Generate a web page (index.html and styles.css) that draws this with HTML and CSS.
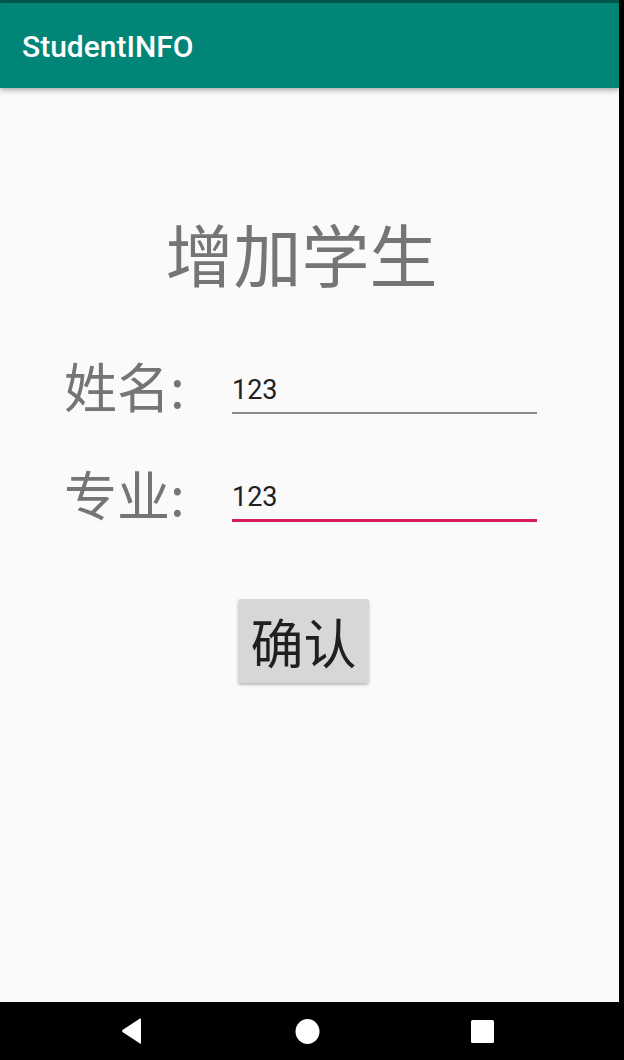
FILE: index.html
```html
<!DOCTYPE html>
<html lang="zh">
<head>
<meta charset="utf-8">
<link rel="stylesheet" href="styles.css">
</head>
<body>
<div class="device">
  <div class="screen">
    <div class="status-bar"></div>
    <header class="app-bar"><span class="app-title">StudentINFO</span></header>
    <main class="content">
      <h1 class="page-title">增加学生</h1>
      <div class="form-row">
        <span class="label">姓名:</span>
        <div class="field"><span class="value">123</span></div>
      </div>
      <div class="form-row">
        <span class="label">专业:</span>
        <div class="field focused"><span class="value">123</span></div>
      </div>
      <div class="actions">
        <button class="btn">确认</button>
      </div>
    </main>
    <nav class="nav-bar">
      <svg class="nav-icon" width="22" height="26" viewBox="0 0 22 26"><path d="M20 1 L20 25 Q20 26 19 25.4 L1.5 14 Q0.5 13 1.5 12 L19 0.6 Q20 0 20 1 Z" fill="#fff"/></svg>
      <svg class="nav-icon" width="25" height="25" viewBox="0 0 25 25"><ellipse cx="12.5" cy="12.5" rx="12" ry="12.5" fill="#fff"/></svg>
      <svg class="nav-icon" width="23" height="23" viewBox="0 0 23 23"><rect x="0" y="0" width="23" height="23" rx="1.5" fill="#fff"/></svg>
    </nav>
  </div>
  <div class="edge"></div>
</div>
</body>
</html>
```
FILE: styles.css
```css
* { box-sizing: border-box; }
html, body { margin: 0; padding: 0; background: #000; }
body { width: 624px; height: 1060px; overflow: hidden; font-family: Roboto, "Noto Sans CJK SC", sans-serif; }
.device { display: flex; width: 624px; height: 1060px; }
.screen { width: 619px; height: 1060px; display: flex; flex-direction: column; background: #fafafa; }
.edge { width: 5px; background: #000; }
.status-bar { height: 3px; background: #00574b; }
.app-bar {
  height: 85px; background: #008577; display: flex; align-items: center;
  padding-left: 22px; position: relative; z-index: 1;
  box-shadow: 0 2px 4px rgba(0,0,0,0.25), 0 4px 8px rgba(0,0,0,0.08);
}
.app-title { color: #fff; font-size: 30px; font-family: Roboto, sans-serif; font-weight: 500; margin-top: 2px; }
.content { flex: 1; display: flex; flex-direction: column; align-items: stretch; }
.page-title {
  margin: 120px 0 0 0; text-align: center; font-weight: 400;
  font-family: "Noto Sans CJK SC", sans-serif; font-size: 68px; line-height: 90px;
  color: #757575; padding-right: 16px;
}
.form-row { display: flex; align-items: flex-end; padding-left: 64px; }
.form-row + .form-row { margin-top: 38px; }
.page-title + .form-row { margin-top: 52px; }
.label {
  font-family: "Noto Sans CJK SC", sans-serif; font-size: 53px; line-height: 70px;
  color: #757575; width: 168px;
}
.field { width: 305px; border-bottom: 2px solid #8a8a8a; padding-bottom: 6px; margin-bottom: 6px; }
.field.focused { border-bottom: 3px solid #d81b60; }
.value { font-family: Roboto, sans-serif; font-size: 27px; line-height: 32px; color: #212121; }
.actions { display: flex; justify-content: center; margin-top: 71px; padding-right: 12px; }
.btn {
  width: 131px; height: 84px; border: none; border-radius: 3px; background: #d6d7d7;
  font-family: "Noto Sans CJK SC", sans-serif; font-size: 53px; color: #1f1f1f;
  box-shadow: 0 2px 3px rgba(0,0,0,0.25); padding: 0;
}
.nav-bar {
  margin-top: auto; height: 58px; background: #000; display: flex; align-items: center;
  justify-content: space-between; padding: 0 125px 0 121px;
}
```
